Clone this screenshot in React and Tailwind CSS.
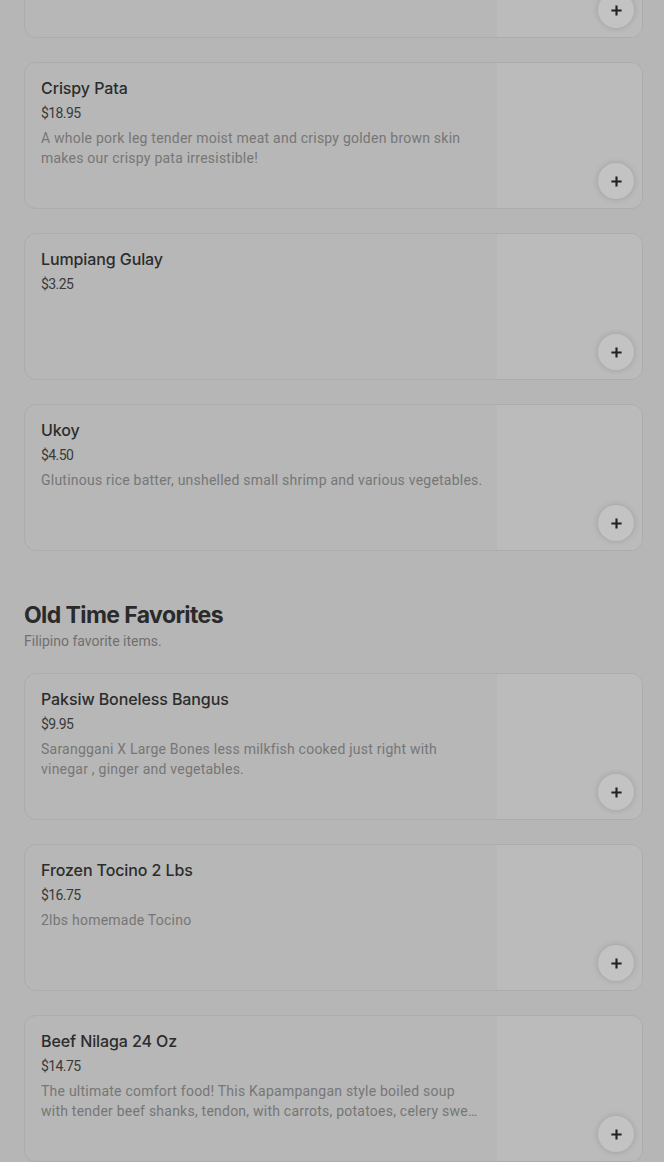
import React from "react";

const items1 = [
  { name: "", price: "", desc: "" },
  {
    name: "Crispy Pata",
    price: "$18.95",
    desc: "A whole pork leg tender moist meat and crispy golden brown skin makes our crispy pata irresistible!",
  },
  { name: "Lumpiang Gulay", price: "$3.25", desc: "" },
  {
    name: "Ukoy",
    price: "$4.50",
    desc: "Glutinous rice batter, unshelled small shrimp and various vegetables.",
  },
];

const items2 = [
  {
    name: "Paksiw Boneless Bangus",
    price: "$9.95",
    desc: "Saranggani X Large Bones less milkfish cooked just right with vinegar , ginger and vegetables.",
  },
  { name: "Frozen Tocino 2 Lbs", price: "$16.75", desc: "2lbs homemade Tocino" },
  {
    name: "Beef Nilaga 24 Oz",
    price: "$14.75",
    desc: "The ultimate comfort food! This Kapampangan style boiled soup with tender beef shanks, tendon, with carrots, potatoes, celery sweet corn, and cabbage.",
  },
];

function Plus() {
  return (
    <svg width="13" height="13" viewBox="0 0 14 14" fill="none">
      <path d="M7 1.5v11M1.5 7h11" stroke="#222" strokeWidth="2.3" />
    </svg>
  );
}

function Card({ item }) {
  return (
    <div className="relative flex h-[147px] rounded-xl border border-[#acacac] bg-[#b7b7b7]">
      <div className="flex-1 min-w-0 pl-4 pr-[14px] pt-[13px]">
        {item.name && (
          <div
            className="text-[16px] leading-6 font-medium text-[#2c2c2c] tracking-[-0.1px]"
            style={{ fontFamily: "Inter, 'Liberation Sans', sans-serif" }}
          >
            {item.name}
          </div>
        )}
        {item.price && (
          <div className="mt-px text-[14px] leading-6 text-[#3a3a3a] tracking-[-0.6px]">{item.price}</div>
        )}
        {item.desc && (
          <div className="mt-[3px] text-[14px] leading-5 text-[#767676] tracking-[0.23px] line-clamp-2">
            {item.desc}
          </div>
        )}
      </div>
      <div className="w-[145px] h-[145px] shrink-0 rounded-r-[11px] bg-[#bbbbbb]" />
      <button className="absolute right-2 bottom-[9px] flex h-9 w-9 items-center justify-center rounded-full bg-[#c3c3c3] shadow-[0_0_6px_rgba(0,0,0,0.16)]">
        <Plus />
      </button>
    </div>
  );
}

export default function App() {
  return (
    <div
      className="h-[1162px] overflow-hidden bg-[#b6b6b6]"
      style={{ fontFamily: "Roboto, 'Liberation Sans', sans-serif" }}
    >
      <div className="mt-[-109px] pl-6 pr-[21px] flex flex-col">
        <div className="flex flex-col gap-6">
          {items1.map((it, i) => (
            <Card key={i} item={it} />
          ))}
        </div>
        <div className="mt-12">
          <h2
            className="text-[23px] leading-8 font-bold tracking-[-0.6px] text-[#2a2a2a]"
            style={{ fontFamily: "Inter, 'Liberation Sans', sans-serif" }}
          >
            Old Time Favorites
          </h2>
          <div className="text-[14px] leading-5 text-[#707070]">Filipino favorite items.</div>
        </div>
        <div className="mt-[22px] flex flex-col gap-6">
          {items2.map((it, i) => (
            <Card key={i} item={it} />
          ))}
        </div>
      </div>
    </div>
  );
}
